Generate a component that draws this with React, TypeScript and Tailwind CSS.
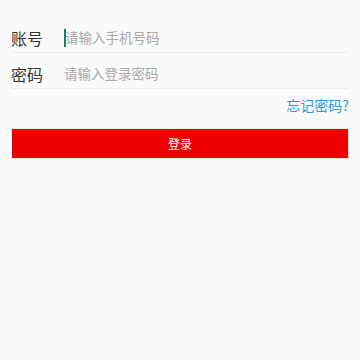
import React from 'react';

const font = { fontFamily: '"Noto Sans CJK SC", "Noto Sans", sans-serif' };

function Field({ label, placeholder, caret }: { label: string; placeholder: string; caret?: boolean }) {
  return (
    <div className="flex h-[36px] items-center border-b border-[#ececec] pt-[7px]">
      <span className="w-[53px] text-[16px] leading-none text-[#333]">{label}</span>
      <div className="flex items-center">
        {caret && <span className="mr-[-1px] h-[18px] w-[2px] bg-[#127f6e]" />}
        <span className="text-[13.5px] leading-none text-[#a8a8a8]">{placeholder}</span>
      </div>
    </div>
  );
}

export default function App() {
  return (
    <div className="h-[360px] w-[360px] bg-[#fafafa] px-[11px] pt-[17px]" style={font}>
      <Field label="账号" placeholder="请输入手机号码" caret />
      <Field label="密码" placeholder="请输入登录密码" />
      <div className="mt-[7px] flex justify-end">
        <span className="text-[14px] leading-[18px] text-[#1c9ae6]">忘记密码?</span>
      </div>
      <button className="mt-[14px] flex h-[31px] w-full items-center justify-center border border-[#e8e8e8] bg-[#ef0000] text-[12px] text-white">
        登录
      </button>
    </div>
  );
}
